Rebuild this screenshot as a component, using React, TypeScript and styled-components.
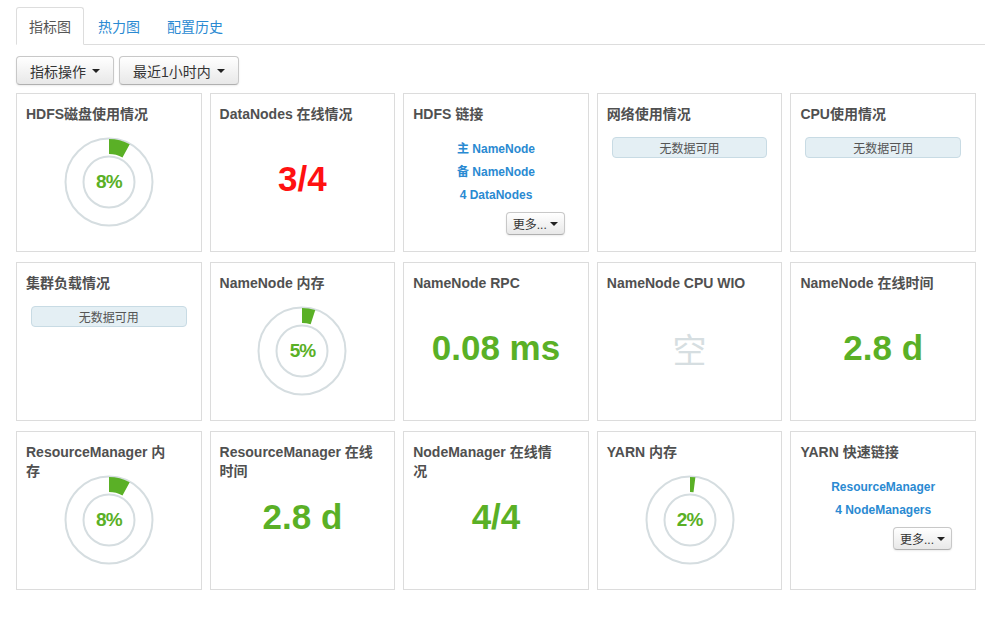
import React from "react";
import styled, { createGlobalStyle } from "styled-components";

const GlobalStyle = createGlobalStyle`
  html, body { margin: 0; padding: 0; background: #fff; }
  body {
    font-family: "Liberation Sans", "Noto Sans CJK SC", Arial, sans-serif;
    color: #333;
  }
  * { box-sizing: border-box; }
`;

const Page = styled.div`
  width: 1004px;
  padding: 7px 19px 20px 16px;
`;

const TabBar = styled.div`
  display: flex;
  align-items: flex-end;
  gap: 1px;
  border-bottom: 1px solid #ddd;
  height: 38px;
`;

const Tab = styled.div<{ $active?: boolean }>`
  height: ${(p) => (p.$active ? "38px" : "37px")};
  margin-bottom: ${(p) => (p.$active ? "-1px" : "0")};
  padding: 0 12px;
  display: flex;
  align-items: center;
  font-size: 14px;
  color: ${(p) => (p.$active ? "#555" : "#2a8ad2")};
  background: ${(p) => (p.$active ? "#fff" : "transparent")};
  border: 1px solid ${(p) => (p.$active ? "#ddd" : "transparent")};
  border-bottom-color: ${(p) => (p.$active ? "#fff" : "transparent")};
  border-radius: 3px 3px 0 0;
`;

const Toolbar = styled.div`
  display: flex;
  gap: 5px;
  margin-top: 11px;
`;

const Button = styled.div<{ $small?: boolean }>`
  display: inline-flex;
  align-items: center;
  gap: ${(p) => (p.$small ? "3px" : "6px")};
  height: ${(p) => (p.$small ? "23px" : "29px")};
  padding: ${(p) => (p.$small ? "0 6px" : "0 13px")};
  font-size: ${(p) => (p.$small ? "12px" : "14px")};
  color: #333;
  background: linear-gradient(#ffffff, #e8e8e8);
  border: 1px solid #c8c8c8;
  border-bottom-color: #b0b0b0;
  border-radius: 4px;
  box-shadow: inset 0 1px 0 rgba(255, 255, 255, 0.3), 0 1px 2px rgba(0, 0, 0, 0.08);
`;

const Caret = styled.span`
  display: inline-block;
  width: 0;
  height: 0;
  border-left: 4px solid transparent;
  border-right: 4px solid transparent;
  border-top: 4px solid #222;
`;

const Grid = styled.div`
  display: grid;
  grid-template-columns: repeat(5, 1fr);
  grid-auto-rows: 159px;
  column-gap: 8px;
  row-gap: 10px;
  margin-top: 8px;
  width: 960px;
`;

const Card = styled.div`
  border: 1px solid #dcdcdc;
  display: grid;
  grid-template-rows: 39px 1fr;
  min-width: 0;
`;

const Title = styled.div`
  padding: 11px 9px 0 9px;
  font-size: 14px;
  line-height: 19px;
  font-weight: bold;
  color: #505050;
  height: 39px;
  overflow: visible;
  white-space: normal;
`;

const Body = styled.div`
  display: flex;
  flex-direction: column;
  align-items: center;
  min-height: 0;
`;

const DonutWrap = styled.div`
  position: relative;
  width: 90px;
  height: 90px;
  margin-top: 4px;
`;

const DonutLabel = styled.div`
  position: absolute;
  inset: 0;
  display: flex;
  align-items: center;
  justify-content: center;
  font-size: 19px;
  font-weight: bold;
  color: #5ab026;
  letter-spacing: -1px;
`;

const BigValue = styled.div<{ $color: string }>`
  margin-top: 26px;
  font-size: 35px;
  line-height: 40px;
  font-weight: bold;
  color: ${(p) => p.$color};
`;

const EmptyGlyph = styled.div`
  margin-top: 27px;
  font-size: 34px;
  line-height: 40px;
  color: #d6dee1;
  font-family: "Noto Sans CJK SC", sans-serif;
`;

const NoData = styled.div`
  align-self: stretch;
  margin: 4px 14px 0 14px;
  height: 21px;
  display: flex;
  align-items: center;
  justify-content: center;
  background: #e4eff4;
  border: 1px solid #c8dbe4;
  border-radius: 4px;
  font-size: 12px;
  color: #555;
`;

const LinkList = styled.div`
  display: flex;
  flex-direction: column;
  align-items: center;
  align-self: stretch;
  padding-top: 5px;
`;

const Link = styled.div`
  font-size: 12px;
  line-height: 23px;
  font-weight: bold;
  color: #2a8ad2;
`;

const MoreRow = styled.div`
  align-self: stretch;
  display: flex;
  justify-content: flex-end;
  padding-right: 23px;
  margin-top: 5px;
`;

const Donut: React.FC<{ pct: number }> = ({ pct }) => {
  const cx = 45;
  const cy = 45;
  const ro = 43;
  const ri = 28;
  const a = (pct / 100) * Math.PI * 2;
  const x1o = cx, y1o = cy - ro;
  const x2o = cx + ro * Math.sin(a), y2o = cy - ro * Math.cos(a);
  const x2i = cx + ri * Math.sin(a), y2i = cy - ri * Math.cos(a);
  const x1i = cx, y1i = cy - ri;
  const large = a > Math.PI ? 1 : 0;
  const d = `M${x1o} ${y1o} A${ro} ${ro} 0 ${large} 1 ${x2o} ${y2o} L${x2i} ${y2i} A${ri} ${ri} 0 ${large} 0 ${x1i} ${y1i} Z`;
  return (
    <DonutWrap>
      <svg width="90" height="90" viewBox="0 0 90 90">
        <circle cx={cx} cy={cy} r={43.5} fill="none" stroke="#d5dde0" strokeWidth="2" />
        <circle cx={cx} cy={cy} r={25.5} fill="none" stroke="#d5dde0" strokeWidth="2" />
        <path d={d} fill="#5ab026" />
      </svg>
      <DonutLabel>{pct}%</DonutLabel>
    </DonutWrap>
  );
};

const More = () => (
  <MoreRow>
    <Button $small>
      更多... <Caret />
    </Button>
  </MoreRow>
);

const GREEN = "#5ab026";

export default function App() {
  return (
    <>
      <GlobalStyle />
      <Page>
        <TabBar>
          <Tab $active>指标图</Tab>
          <Tab>热力图</Tab>
          <Tab>配置历史</Tab>
        </TabBar>
        <Toolbar>
          <Button>
            指标操作 <Caret />
          </Button>
          <Button>
            最近1小时内 <Caret />
          </Button>
        </Toolbar>
        <Grid>
          <Card>
            <Title>HDFS磁盘使用情况</Title>
            <Body><Donut pct={8} /></Body>
          </Card>
          <Card>
            <Title>DataNodes 在线情况</Title>
            <Body><BigValue $color="#ff1111">3/4</BigValue></Body>
          </Card>
          <Card>
            <Title>HDFS 链接</Title>
            <Body>
              <LinkList>
                <Link>主 NameNode</Link>
                <Link>备 NameNode</Link>
                <Link>4 DataNodes</Link>
              </LinkList>
              <More />
            </Body>
          </Card>
          <Card>
            <Title>网络使用情况</Title>
            <Body><NoData>无数据可用</NoData></Body>
          </Card>
          <Card>
            <Title>CPU使用情况</Title>
            <Body><NoData>无数据可用</NoData></Body>
          </Card>

          <Card>
            <Title>集群负载情况</Title>
            <Body><NoData>无数据可用</NoData></Body>
          </Card>
          <Card>
            <Title>NameNode 内存</Title>
            <Body><Donut pct={5} /></Body>
          </Card>
          <Card>
            <Title>NameNode RPC</Title>
            <Body><BigValue $color={GREEN}>0.08 ms</BigValue></Body>
          </Card>
          <Card>
            <Title>NameNode CPU WIO</Title>
            <Body><EmptyGlyph>空</EmptyGlyph></Body>
          </Card>
          <Card>
            <Title>NameNode 在线时间</Title>
            <Body><BigValue $color={GREEN}>2.8 d</BigValue></Body>
          </Card>

          <Card>
            <Title>ResourceManager 内<br />存</Title>
            <Body><Donut pct={8} /></Body>
          </Card>
          <Card>
            <Title>ResourceManager 在线<br />时间</Title>
            <Body><BigValue $color={GREEN}>2.8 d</BigValue></Body>
          </Card>
          <Card>
            <Title>NodeManager 在线情<br />况</Title>
            <Body><BigValue $color={GREEN}>4/4</BigValue></Body>
          </Card>
          <Card>
            <Title>YARN 内存</Title>
            <Body><Donut pct={2} /></Body>
          </Card>
          <Card>
            <Title>YARN 快速链接</Title>
            <Body>
              <LinkList>
                <Link>ResourceManager</Link>
                <Link>4 NodeManagers</Link>
              </LinkList>
              <More />
            </Body>
          </Card>
        </Grid>
      </Page>
    </>
  );
}
